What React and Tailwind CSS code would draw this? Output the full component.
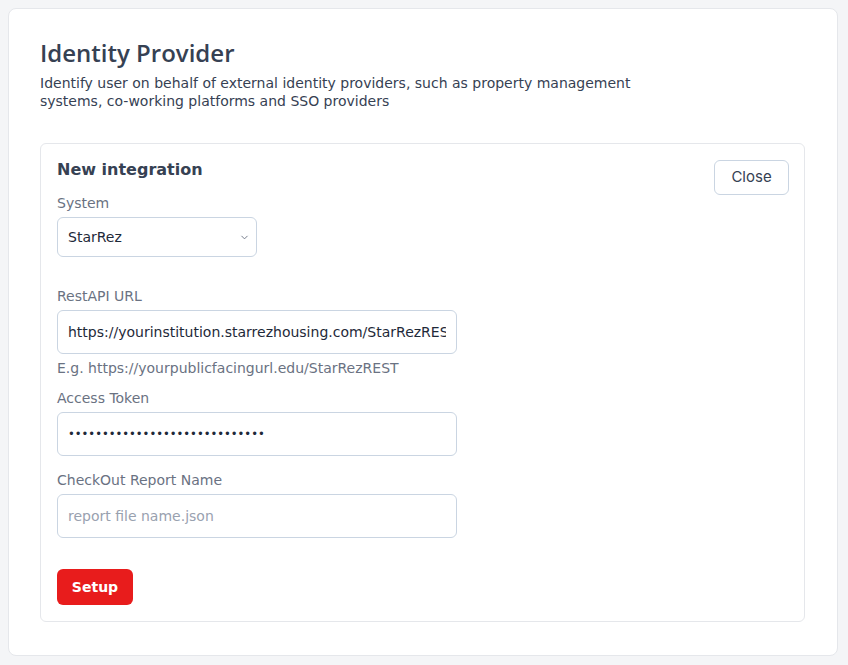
import { ChevronDown } from "lucide-react";

function Field({ label, children, hint }) {
  return (
    <div className="flex flex-col">
      <label className="text-[14px] leading-5 text-gray-500 mb-[4px]">{label}</label>
      {children}
      {hint && <p className="text-[14px] leading-4 text-gray-500 mt-[6px] mb-[-2px]">{hint}</p>}
    </div>
  );
}

export default function App() {
  return (
    <div className="min-h-screen bg-[#f4f5f7] pt-2 pb-2 pl-2 pr-[10px] font-['DejaVu_Sans',sans-serif]">
      <div className="bg-white border border-gray-200 rounded-lg pl-[31px] pr-[32px] pt-[28px] pb-[33px]">
        <h1 className="text-[24px] leading-8 font-semibold text-gray-700 font-['Open_Sans',sans-serif]">
          Identity Provider
        </h1>
        <p className="mt-[5px] w-[600px] text-[14px] leading-[18px] text-gray-700">
          Identify user on behalf of external identity providers, such as property management systems, co-working
          platforms and SSO providers
        </p>

        <div className="mt-[33px] border border-gray-200 rounded-md px-4 pt-4 pb-4">
          <div className="flex items-start justify-between">
            <div className="flex flex-col gap-[13px]">
              <h2 className="text-[16px] leading-5 font-bold text-gray-700">New integration</h2>
              <Field label="System">
                <div className="relative w-[200px] h-10 border border-slate-300 rounded-md flex items-center px-[10px]">
                  <span className="text-[14px] text-gray-800">StarRez</span>
                  <ChevronDown size={11} className="absolute right-[6px] text-gray-500" />
                </div>
              </Field>
            </div>
            <button className="mr-[-1px] h-[35px] w-[75px] border border-slate-300 rounded-md text-[15px] text-gray-700 font-['Inter',sans-serif]">
              Close
            </button>
          </div>

          <div className="mt-[29px] flex flex-col gap-[14px] w-[400px]">
            <Field label="RestAPI URL" hint="E.g. https://yourpublicfacingurl.edu/StarRezREST">
              <input
                readOnly
                value="https://yourinstitution.starrezhousing.com/StarRezREST"
                className="h-11 w-full border border-slate-300 rounded-md px-[10px] text-[14px] text-gray-800 outline-none"
              />
            </Field>
            <Field label="Access Token">
              <input
                readOnly
                value={"•".repeat(29)}
                className="h-11 w-full border border-slate-300 rounded-md px-[10px] text-[11.5px] text-gray-800 outline-none"
              />
            </Field>
            <Field label="CheckOut Report Name">
              <input
                readOnly
                placeholder="report file name.json"
                className="h-11 w-full border border-slate-300 rounded-md px-[10px] text-[14px] text-gray-800 placeholder:text-gray-400 outline-none"
              />
            </Field>
          </div>

          <button className="mt-[31px] h-9 w-[76px] bg-[#e81c1c] rounded-md text-white text-[14px] font-semibold">
            Setup
          </button>
        </div>
      </div>
    </div>
  );
}
